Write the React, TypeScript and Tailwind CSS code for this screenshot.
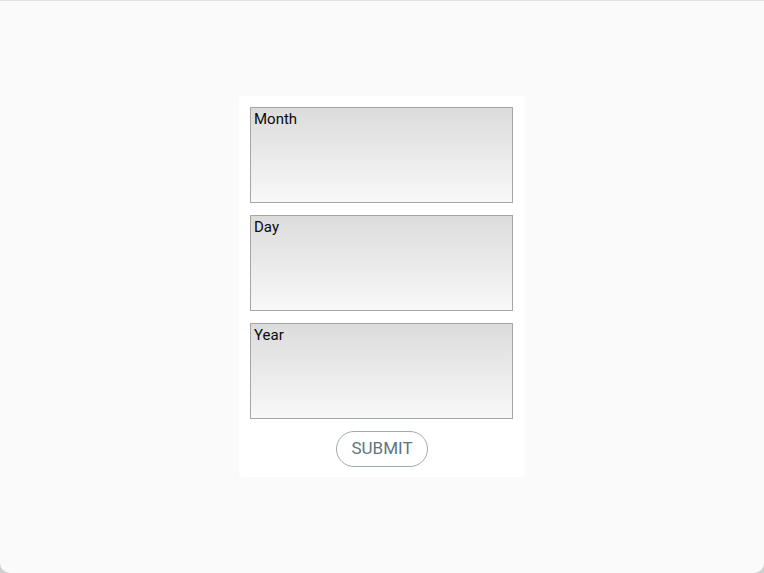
import React from "react";

const fields = ["Month", "Day", "Year"];

export default function App() {
  return (
    <div className="h-[573px] w-[764px] bg-[#cfcfcf]">
      <div
        className="flex h-full w-full justify-center rounded-b-[10px] border-t border-[#e2e2e2] bg-[#fafafa] pt-[95px]"
        style={{ fontFamily: "Roboto, 'Noto Sans', sans-serif" }}
      >
        <div className="flex h-[381px] w-[286px] flex-col rounded-[4px] bg-white px-[11px] pt-[11px]">
          {fields.map((f) => (
            <div
              key={f}
              className="mb-[12px] h-[96px] w-[263px] border border-[#a6a6a6] bg-gradient-to-b from-[#dcdcdc] to-[#f8f8f8] px-[3px] pt-[2px] text-[15px] leading-[18px] text-[#0a0a0a]"
            >
              {f}
            </div>
          ))}
          <div className="flex justify-center">
            <button
              type="button"
              className="h-[36px] w-[92px] rounded-full border border-[#9eaab0] bg-white text-[17px] text-[#607480]"
            >
              SUBMIT
            </button>
          </div>
        </div>
      </div>
    </div>
  );
}
